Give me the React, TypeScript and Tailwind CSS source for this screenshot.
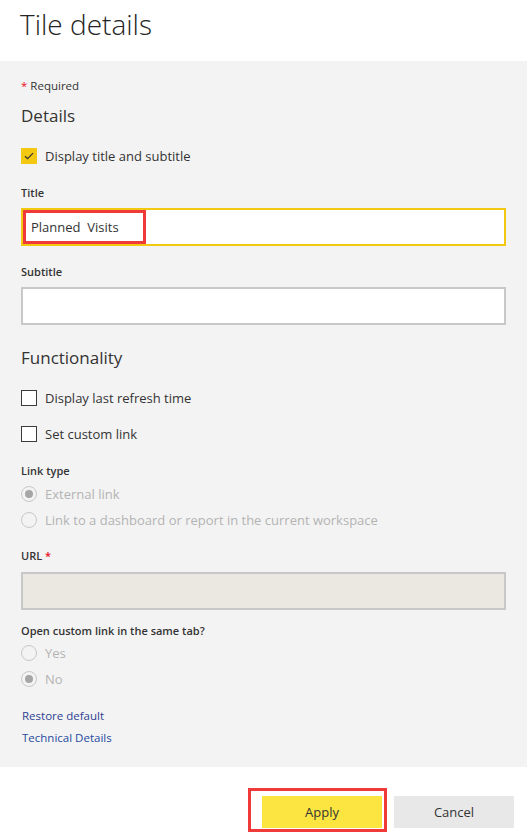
const font = { fontFamily: '"Open Sans", "Noto Sans", sans-serif' };

const Checkbox = ({ checked, label }: { checked?: boolean; label: string }) => (
  <div className="flex h-6 items-center gap-[8px]">
    {checked ? (
      <span className="flex h-4 w-4 items-center justify-center bg-[#f2c811]">
        <svg width="10" height="8" viewBox="0 0 10 8" fill="none">
          <path d="M1 4.2 3.6 6.6 9 1.2" stroke="#333" strokeWidth="1.2" />
        </svg>
      </span>
    ) : (
      <span className="h-4 w-4 border border-[#3b3a39] bg-white" />
    )}
    <span className="pt-[2px] text-[13px] text-[#333]">{label}</span>
  </div>
);

const Radio = ({ checked, label }: { checked?: boolean; label: string }) => (
  <div className="flex h-6 items-center gap-[8px]">
    <span className="flex h-4 w-4 items-center justify-center rounded-full border border-[#c8c8c8]">
      {checked && <span className="h-2 w-2 rounded-full bg-[#a6a6a6]" />}
    </span>
    <span className="pt-[2px] text-[13px] text-[#b3b3b3]">{label}</span>
  </div>
);

const Label = ({ children, className = '' }: { children: React.ReactNode; className?: string }) => (
  <p className={`h-4 pt-px text-[11px] font-semibold leading-4 text-[#333] ${className}`}>{children}</p>
);

export default function App() {
  return (
    <div className="flex h-[835px] w-full flex-col bg-white" style={font}>
      <header className="h-[61px] shrink-0 px-[20px] pt-[4px]">
        <h1 className="text-[28px] font-light leading-[40px] text-[#252423]">Tile details</h1>
      </header>

      <main className="h-[706px] shrink-0 bg-[#f3f3f3] px-[21px] pt-[17px]">
        <p className="h-4 text-[11.5px] leading-4 text-[#333]">
          <span className="text-[#e81123]">*</span> Required
        </p>
        <h2 className="mt-[10px] h-6 text-[17px] leading-6 text-[#333]">Details</h2>
        <div className="mt-[16px]">
          <Checkbox checked label="Display title and subtitle" />
        </div>

        <Label className="mt-[16px]">Title</Label>
        <div className="mt-[8px] flex h-[38px] items-center border-2 border-[#f2c811] bg-white">
          <div className="flex h-[34px] w-[123px] items-center border-[3px] border-[#f03a3a] pl-[5px] pt-px text-[13px] text-[#333]">
            Planned&nbsp;&nbsp;Visits
          </div>
        </div>

        <Label className="mt-[17px]">Subtitle</Label>
        <div className="mt-[8px] h-[38px] border-2 border-[#c8c8c8] bg-white" />

        <h2 className="mt-[21px] h-6 text-[17px] leading-6 text-[#333]">Functionality</h2>
        <div className="mt-[16px]">
          <Checkbox label="Display last refresh time" />
        </div>
        <div className="mt-[12px]">
          <Checkbox label="Set custom link" />
        </div>

        <Label className="mt-[16px]">Link type</Label>
        <div className="mt-[4px]">
          <Radio checked label="External link" />
        </div>
        <div className="mt-[2px]">
          <Radio label="Link to a dashboard or report in the current workspace" />
        </div>

        <Label className="mt-[15px]">
          URL <span className="text-[#e81123]">*</span>
        </Label>
        <div className="mt-[9px] h-[38px] border-2 border-[#c8c8c8] bg-[#eae8e1]" />

        <Label className="mt-[12px]">Open custom link in the same tab?</Label>
        <div className="mt-[3px]">
          <Radio label="Yes" />
        </div>
        <div className="mt-[2px]">
          <Radio checked label="No" />
        </div>

        <p className="mt-[17px] h-4 pl-px text-[11.5px] leading-4 text-[#2d3f94]">Restore default</p>
        <p className="mt-[6px] h-4 pl-px text-[11.5px] leading-4 text-[#1f4aa0]">Technical Details</p>
      </main>

      <footer className="flex flex-1 items-start justify-end gap-[7px] pr-[13px] pt-[21px]">
        <div className="border-[3px] border-[#f03a3a] pb-[1px] pl-[11px] pr-[2px] pt-[5px]">
          <button className="h-8 w-[120px] bg-[#fde541] pt-px text-[13px] text-[#333]">Apply</button>
        </div>
        <button className="mt-[8px] h-8 w-[120px] bg-[#e8e8e8] pt-px text-[13px] text-[#333]">Cancel</button>
      </footer>
    </div>
  );
}
